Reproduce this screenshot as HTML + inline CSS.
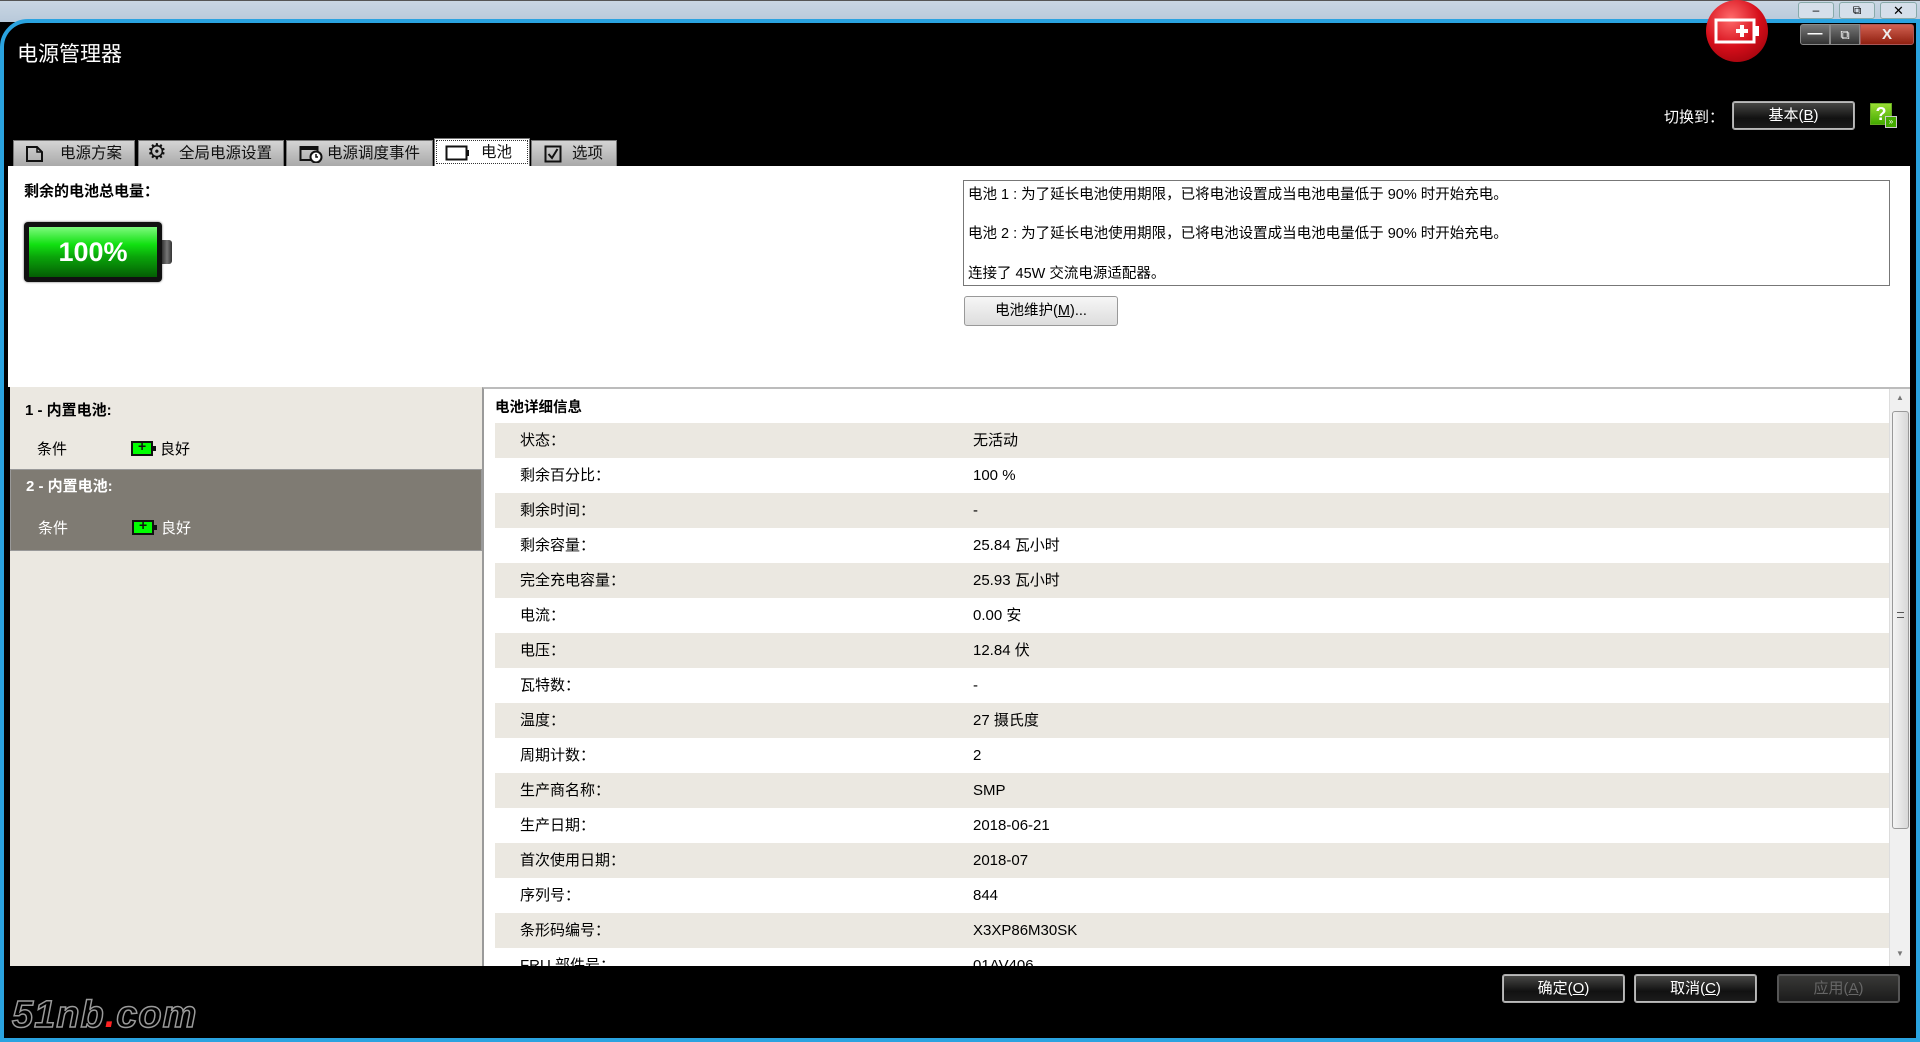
<!DOCTYPE html>
<html><head><meta charset="utf-8">
<style>
*{margin:0;padding:0;box-sizing:border-box}
body{width:1920px;height:1042px;overflow:hidden;background:#000;font-family:"Liberation Sans","Noto Sans CJK SC",sans-serif;font-size:15px;color:#000;position:relative}
.abs{position:absolute}
.chrome{left:0;top:0;width:1920px;height:22px;background:linear-gradient(#c9d6e3,#b8c9da);border-top:1px solid #555}
.frame{left:0;top:19px;width:1920px;height:1023px;border:4px solid #2aa3e0;border-radius:28px 0 0 0;background:#000}
.title{left:17px;top:38px;color:#fff;font-size:21px}
.tab{top:140px;height:26px;background:linear-gradient(#d4d4d4,#a9a9a9);border:1px solid #777;border-bottom:none;font-size:15.5px;color:#111;line-height:25px;white-space:nowrap;overflow:hidden}
.tab.act{background:#fff;top:138px;height:28px;outline:1px dotted #333;outline-offset:-3px;line-height:27px}
.white{left:8px;top:166px;width:1902px;height:221px;background:#fff}
.bt{border:1px solid #aaa;border-radius:3px;text-align:center;color:#fff;background:linear-gradient(#4a4a48,#111 60%,#1d1d1d);box-shadow:inset 0 0 0 1px #bbb;font-size:15px}
.left{left:10px;top:387px;width:472px;height:579px;background:#ebe8e1}
.right{left:482px;top:387px;width:1428px;height:579px;background:#fff;border-left:2px solid #9a9a9a;border-top:2px solid #bcbcbc;overflow:hidden}
.row{position:absolute;left:11px;width:1394px;height:35px;line-height:35px}
.row.g{background:#ebe8e1}
.row span{position:absolute;left:25px}
.row b{position:absolute;left:478px;font-weight:normal}
.mini{display:inline-block;width:22px;height:15px;background:#0f0;border:2px solid #111;position:relative;vertical-align:-2px;margin-right:7px}
.mini:after{content:"";position:absolute;right:-5px;top:3px;width:3px;height:5px;background:#111}
.mini:before{content:"+";position:absolute;left:5px;top:-5px;font-weight:bold;font-size:14px;color:#111}
</style></head><body>
<div class="abs chrome"></div>
<div class="abs" style="left:1798px;top:2px;width:36px;height:17px;border:1px solid #8aa;border-radius:3px;background:#d5dfea;text-align:center;font-size:12px;line-height:15px">&#8211;</div>
<div class="abs" style="left:1839px;top:2px;width:36px;height:17px;border:1px solid #8aa;border-radius:3px;background:#d5dfea;text-align:center;font-size:12px;line-height:15px">&#10697;</div>
<div class="abs" style="left:1880px;top:2px;width:37px;height:17px;border:1px solid #8aa;border-radius:3px;background:#d5dfea;text-align:center;font-size:13px;line-height:15px">&#10005;</div>
<div class="abs frame"></div>
<div class="abs title">电源管理器</div>
<div class="abs" style="left:1706px;top:0;width:62px;height:62px;border-radius:50%;background:radial-gradient(circle at 40% 30%,#ff6b6b,#d60e1a 50%,#8a0008)"></div>
<svg class="abs" style="left:1714px;top:18px" width="48" height="28"><rect x="2" y="2" width="38" height="22" fill="none" stroke="#fff" stroke-width="3"/><rect x="40" y="8" width="5" height="10" fill="#fff"/><rect x="26" y="7" width="4" height="12" fill="#fff"/><rect x="22" y="11" width="12" height="4" fill="#fff"/></svg>
<div class="abs" style="left:1800px;top:24px;width:30px;height:21px;background:linear-gradient(#777,#333);border-radius:3px 0 0 3px;border:1px solid #888;color:#fff;text-align:center;font-weight:bold;line-height:17px">&#8212;</div>
<div class="abs" style="left:1830px;top:24px;width:30px;height:21px;background:linear-gradient(#777,#333);border:1px solid #888;color:#fff;text-align:center;font-size:13px;line-height:19px">&#10697;</div>
<div class="abs" style="left:1860px;top:24px;width:54px;height:21px;background:linear-gradient(#d06050,#902010);border-radius:0 3px 3px 0;border:1px solid #a55;color:#eee;text-align:center;font-weight:bold;line-height:19px">X</div>
<div class="abs" style="left:1664px;top:106px;color:#fff;font-size:15px">切换到：</div>
<div class="abs bt" style="left:1732px;top:101px;width:123px;height:29px;line-height:27px">基本(<u>B</u>)</div>
<div class="abs" style="left:1870px;top:103px;width:22px;height:22px;background:linear-gradient(#9d3,#4a0);border:1px solid #6a2;color:#fff;font-weight:bold;font-size:18px;line-height:20px;text-align:center">?</div>
<div class="abs" style="left:1885px;top:116px;width:12px;height:12px;background:#4a0;border:1px solid #ccc;color:#fff;font-size:8px;line-height:10px;text-align:center">&#187;</div>
<!-- tabs -->
<div class="abs tab" style="left:13px;width:122px">
<svg class="abs" style="left:11px;top:4px" width="20" height="18"><path d="M2 2H12L17 7V16H2Z" fill="none" stroke="#111" stroke-width="2"/><path d="M12 2V7H17" fill="none" stroke="#111" stroke-width="1.5"/></svg>
<span class="abs" style="left:46px">电源方案</span></div>
<div class="abs tab" style="left:138px;width:146px">
<span class="abs" style="left:8px;top:-2px;font-size:22px">&#9881;</span>
<span class="abs" style="left:40px">全局电源设置</span></div>
<div class="abs tab" style="left:286px;width:147px">
<svg class="abs" style="left:12px;top:4px" width="24" height="18"><rect x="1.5" y="2" width="17" height="13" fill="none" stroke="#111" stroke-width="2"/><rect x="1.5" y="2" width="17" height="3" fill="#111"/><circle cx="17" cy="12" r="5.5" fill="#fff" stroke="#111" stroke-width="2"/><path d="M17 9V12H19" stroke="#111" stroke-width="1.5" fill="none"/></svg>
<span class="abs" style="left:40px">电源调度事件</span></div>
<div class="abs tab act" style="left:434px;width:96px">
<svg class="abs" style="left:10px;top:6px" width="26" height="16"><rect x="1.5" y="1.5" width="20" height="13" fill="none" stroke="#111" stroke-width="2"/><rect x="21" y="5" width="3" height="6" fill="#111"/></svg>
<span class="abs" style="left:46px">电池</span></div>
<div class="abs tab" style="left:531px;width:86px">
<svg class="abs" style="left:12px;top:4px" width="18" height="18"><rect x="1.5" y="1.5" width="15" height="15" fill="none" stroke="#111" stroke-width="2"/><path d="M4.5 9L8 13L13.5 4" fill="none" stroke="#111" stroke-width="2"/></svg>
<span class="abs" style="left:40px">选项</span></div>
<div class="abs white"></div>
<div class="abs" style="left:24px;top:180px;font-weight:bold;font-size:15px">剩余的电池总电量：</div>
<div class="abs" style="left:24px;top:222px;width:138px;height:60px;background:#111;border-radius:4px;padding:5px;box-shadow:0 0 2px #666">
<div style="width:100%;height:100%;background:linear-gradient(#7dfa7d,#11e011 35%,#0aa40a 60%,#045e04);color:#fff;font-weight:bold;font-size:27px;text-align:center;line-height:50px">100%</div></div>
<div class="abs" style="left:162px;top:240px;width:10px;height:24px;background:linear-gradient(90deg,#333,#777,#333);border-radius:0 3px 3px 0"></div>
<div class="abs" style="left:963px;top:180px;width:927px;height:106px;border:1px solid #777;padding:4px 4px;font-size:14.5px;line-height:20px">
<div>电池 1 : 为了延长电池使用期限，已将电池设置成当电池电量低于 90% 时开始充电。</div>
<div style="margin-top:19px">电池 2 : 为了延长电池使用期限，已将电池设置成当电池电量低于 90% 时开始充电。</div>
<div style="margin-top:20px">连接了 45W 交流电源适配器。</div></div>
<div class="abs" style="left:964px;top:296px;width:154px;height:30px;border:1px solid #999;border-radius:3px;background:linear-gradient(#f6f6f6,#ddd);text-align:center;line-height:28px;font-size:14.5px">电池维护(<u>M</u>)...</div>
<div class="abs left">
<div class="abs" style="left:15px;top:12px;font-weight:bold">1 - 内置电池:</div>
<div class="abs" style="left:27px;top:51px">条件</div>
<div class="abs" style="left:121px;top:51px"><span class="mini"></span>良好</div>
<div class="abs" style="left:0;top:82px;width:472px;height:82px;background:#7f7b73;border:1px solid #999;color:#fff">
<div class="abs" style="left:15px;top:5px;font-weight:bold">2 - 内置电池:</div>
<div class="abs" style="left:27px;top:47px">条件</div>
<div class="abs" style="left:121px;top:47px"><span class="mini"></span>良好</div></div>
</div>
<div class="abs right">
<div class="abs" style="left:11px;top:7px;font-weight:bold;font-size:14.5px">电池详细信息</div>
<div class="row g" style="top:34px"><span>状态：</span><b>无活动</b></div>
<div class="row" style="top:69px"><span>剩余百分比：</span><b>100 %</b></div>
<div class="row g" style="top:104px"><span>剩余时间：</span><b>-</b></div>
<div class="row" style="top:139px"><span>剩余容量：</span><b>25.84 瓦小时</b></div>
<div class="row g" style="top:174px"><span>完全充电容量：</span><b>25.93 瓦小时</b></div>
<div class="row" style="top:209px"><span>电流：</span><b>0.00 安</b></div>
<div class="row g" style="top:244px"><span>电压：</span><b>12.84 伏</b></div>
<div class="row" style="top:279px"><span>瓦特数：</span><b>-</b></div>
<div class="row g" style="top:314px"><span>温度：</span><b>27 摄氏度</b></div>
<div class="row" style="top:349px"><span>周期计数：</span><b>2</b></div>
<div class="row g" style="top:384px"><span>生产商名称：</span><b>SMP</b></div>
<div class="row" style="top:419px"><span>生产日期：</span><b>2018-06-21</b></div>
<div class="row g" style="top:454px"><span>首次使用日期：</span><b>2018-07</b></div>
<div class="row" style="top:489px"><span>序列号：</span><b>844</b></div>
<div class="row g" style="top:524px"><span>条形码编号：</span><b>X3XP86M30SK</b></div>
<div class="row" style="top:559px"><span>FRU 部件号：</span><b>01AV406</b></div>
<div class="abs" style="left:1405px;top:0;width:21px;height:579px;background:#f0f0f0;border-left:1px solid #ddd">
<div style="text-align:center;font-size:8px;color:#777;margin-top:4px">&#9650;</div>
<div class="abs" style="left:2px;top:22px;width:17px;height:418px;border:1px solid #999;border-radius:3px;background:linear-gradient(90deg,#f4f4f4,#d8d8d8)"><div class="abs" style="left:4px;top:200px;width:7px;height:6px;border-top:1px solid #555;border-bottom:1px solid #555"></div></div>
<div class="abs" style="left:0;top:560px;width:20px;text-align:center;font-size:8px;color:#777">&#9660;</div></div>
</div>
<div class="abs bt" style="left:1502px;top:974px;width:123px;height:29px;line-height:27px">确定(<u>O</u>)</div>
<div class="abs bt" style="left:1634px;top:974px;width:123px;height:29px;line-height:27px">取消(<u>C</u>)</div>
<div class="abs bt" style="left:1777px;top:974px;width:123px;height:29px;line-height:27px;color:#666;box-shadow:inset 0 0 0 1px #555;border-color:#555;background:linear-gradient(#3a3a38,#1a1a1a)">应用(<u>A</u>)</div>
<div class="abs" style="left:12px;top:994px;font-size:38px;font-weight:bold;font-style:italic;color:#000;-webkit-text-stroke:1.5px #9a9a9a;letter-spacing:1px">51nb<span style="color:#f22;-webkit-text-stroke:0">.</span>com</div>
</body></html>
